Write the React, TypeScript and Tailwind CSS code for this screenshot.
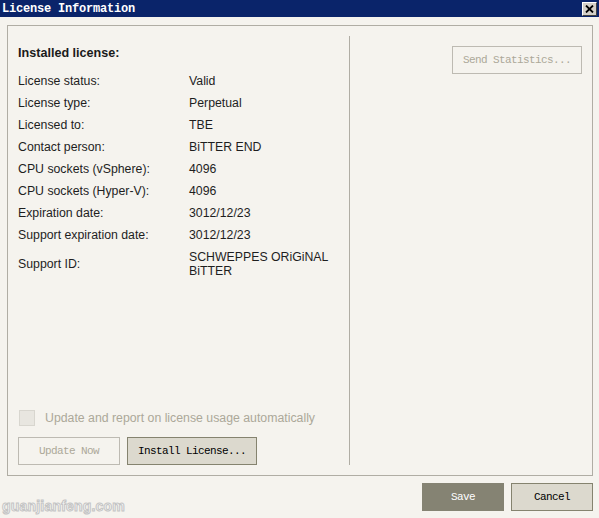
import React from 'react';

const rows: [string, string][] = [
  ['License status:', 'Valid'],
  ['License type:', 'Perpetual'],
  ['Licensed to:', 'TBE'],
  ['Contact person:', 'BiTTER END'],
  ['CPU sockets (vSphere):', '4096'],
  ['CPU sockets (Hyper-V):', '4096'],
  ['Expiration date:', '3012/12/23'],
  ['Support expiration date:', '3012/12/23'],
];

const mono = "font-['Liberation_Mono',monospace] text-[11px] tracking-[-0.6px]";

export default function App() {
  return (
    <div className="relative w-[599px] h-[518px] bg-[#f5f3ee] font-['Liberation_Sans',Arial,sans-serif] text-[12.3px] text-[#1e1e1e] overflow-hidden">
      {/* title bar */}
      <div className="h-[17px] bg-[#0a246a] flex items-center justify-between pl-[2px] pr-[2px]">
        <span className="font-['Liberation_Mono',monospace] font-bold text-[12px] text-white leading-none tracking-[-0.2px]">License Information</span>
        <button className="w-[15px] h-[14px] mt-[1px] bg-[#d4d0c8] border border-t-white border-l-white border-b-[#404040] border-r-[#404040] flex items-center justify-center">
          <svg width="9" height="8" viewBox="0 0 9 8">
            <path d="M1 0.5 L8 7.5 M8 0.5 L1 7.5" stroke="#000" strokeWidth="1.8" />
          </svg>
        </button>
      </div>

      {/* main panel */}
      <div className="mt-[8px] ml-[7px] mr-[6px] h-[451px] border border-[#b0ada4] flex py-[10px]">
        <div className="w-[342px] border-r border-[#b0ada4] flex flex-col pl-[10px]">
          <div className="mt-[6px] h-[22px] leading-[22px] font-bold text-[12.6px] text-[#1a1a1a]">Installed license:</div>
          <div className="mt-[6px] flex flex-col">
            {rows.map(([k, v]) => (
              <div key={k} className="flex h-[22px] items-center">
                <span className="w-[171px]">{k}</span>
                <span>{v}</span>
              </div>
            ))}
            <div className="flex h-[36px] items-center">
              <span className="w-[171px]">Support ID:</span>
              <span className="leading-[14px]">SCHWEPPES ORiGiNAL<br />BiTTER</span>
            </div>
          </div>
          <div className="flex-1" />
          <div className="flex items-center h-[16px] ml-[1px] gap-[10px]">
            <div className="w-[16px] h-[16px] border border-[#d8d6cf] bg-[#e8e6e0]" />
            <span className="text-[#aca899]">Update and report on license usage automatically</span>
          </div>
          <div className="mt-[11px] flex gap-[7px]">
            <button className={`w-[102px] h-[28px] border border-[#bdbab2] text-[#aca899] ${mono}`}>Update Now</button>
            <button className={`w-[130px] h-[28px] border border-[#85836f] bg-[#dcd9ce] text-black ${mono}`}>Install License...</button>
          </div>
        </div>
        <div className="flex-1 flex justify-end items-start pr-[10px] pt-[10px]">
          <button className={`w-[130px] h-[28px] border border-[#bdbab2] text-[#aca899] ${mono}`}>Send Statistics...</button>
        </div>
      </div>

      {/* footer */}
      <div className="mt-[7px] mr-[6px] flex justify-end gap-[7px]">
        <button className={`w-[82px] h-[28px] bg-[#858373] text-white ${mono}`}>Save</button>
        <button className={`w-[82px] h-[28px] border border-[#85836f] bg-[#dcd9ce] text-black ${mono}`}>Cancel</button>
      </div>

      <div className="absolute left-[2px] top-[496px] font-['Liberation_Sans',Arial,sans-serif] font-bold text-[14px] text-[#f8f8f8] [-webkit-text-stroke:1px_#c4c4c4] tracking-[0.2px]">
        guanjianfeng.com
      </div>
    </div>
  );
}
